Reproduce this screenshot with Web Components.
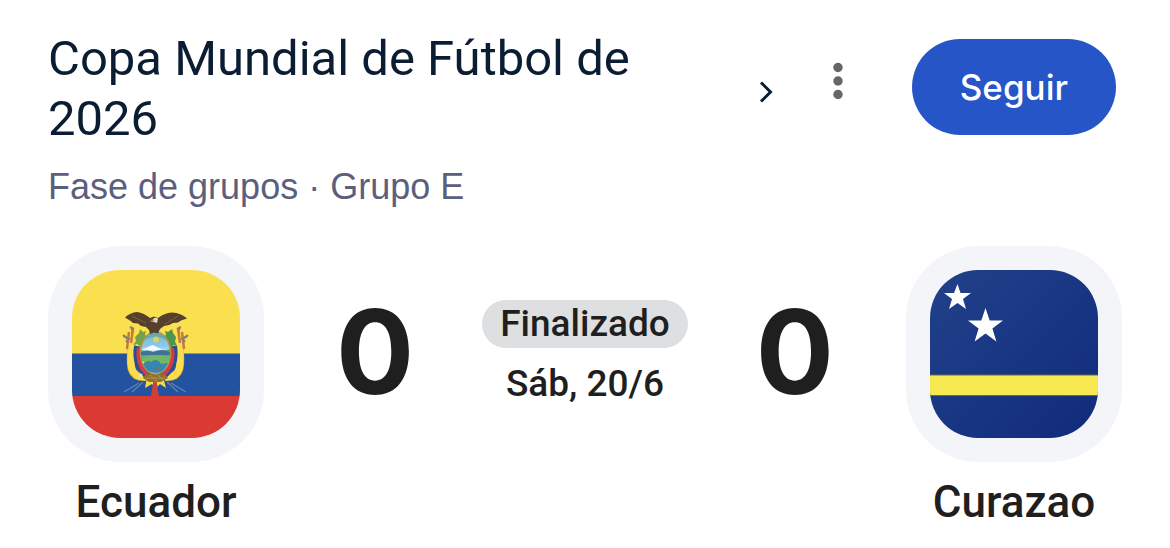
<!DOCTYPE html>
<html lang="es">
<head>
<meta charset="utf-8">
<meta name="viewport" content="width=device-width, initial-scale=1">
<title>Ecuador 0 - 0 Curazao</title>
<style>
  body { margin: 0; background: #fff; color: #1f1f1f; font-family: Roboto, "Liberation Sans", sans-serif; }
</style>
</head>
<body>
<match-card>
  <competition-header slot="header">
    <span slot="title">Copa Mundial de Fútbol de 2026</span>
    <span slot="stage">Fase de grupos · Grupo E</span>
  </competition-header>
  <team-badge slot="home"><flag-ecuador slot="flag"></flag-ecuador>Ecuador</team-badge>
  <team-score slot="home-score">0</team-score>
  <match-status slot="status">Finalizado<time slot="date" datetime="2026-06-20">Sáb, 20/6</time></match-status>
  <team-score slot="away-score">0</team-score>
  <team-badge slot="away"><flag-curacao slot="flag"></flag-curacao>Curazao</team-badge>
</match-card>

<script>
function define(name, html) {
  const template = document.createElement('template');
  template.innerHTML = html;
  customElements.define(name, class extends HTMLElement {
    constructor() {
      super();
      this.attachShadow({ mode: 'open' }).append(template.content.cloneNode(true));
    }
  });
}

define('match-card', `
  <style>
    :host { display: block; padding: 29px 48px 16px; }
    .match { display: grid; grid-template-columns: auto 1fr auto; margin-top: 35px; }
    .result { display: grid; grid-template-columns: 1fr auto 1fr; align-items: center;
      justify-items: center; height: 216px; padding: 0 4px; }
  </style>
  <slot name="header"></slot>
  <main class="match">
    <slot name="home"></slot>
    <div class="result">
      <slot name="home-score"></slot>
      <slot name="status"></slot>
      <slot name="away-score"></slot>
    </div>
    <slot name="away"></slot>
  </main>`);

define('competition-header', `
  <style>
    :host { display: block; }
    header { display: grid; grid-template-columns: 1fr auto auto; align-items: start; padding-right: 6px; }
    a { display: flex; align-items: center; justify-content: space-between; color: #0a1d33; text-decoration: none; }
    h1 { margin: 0; max-width: 640px; font-size: 49px; line-height: 60px; font-weight: 400; }
    p { grid-column: 1; margin: 14px 0 0; color: #5c5e7e; font: 36px/48px "Liberation Sans", Arial, sans-serif; }
    svg { display: block; }
    .chevron { flex: none; margin-top: 6px; }
    button { border: 0; padding: 0; background: none; cursor: pointer; }
    .more { width: 48px; height: 60px; margin: 22px 50px 0 36px; }
    .more svg { margin: auto; }
    .follow { height: 96px; margin-top: 10px; padding: 0 48px; border-radius: 48px; background: #2655c8;
      color: #fff; font: 500 35px/48px Inter, "Liberation Sans", sans-serif; }
  </style>
  <header>
    <a href="#competicion">
      <h1><slot name="title"></slot></h1>
      <svg class="chevron" width="24" height="24" viewBox="0 0 24 24" aria-hidden="true">
        <path d="M7 2.500 16.500 12 7 21.500" fill="none" stroke="#0a1d33" stroke-width="3"/>
      </svg>
    </a>
    <button class="more" type="button" aria-label="Más opciones">
      <svg width="12" height="40" viewBox="0 0 12 40" fill="#666" aria-hidden="true">
        <circle cx="6" cy="6.500" r="4.700"/><circle cx="6" cy="20" r="4.700"/><circle cx="6" cy="33.500" r="4.700"/>
      </svg>
    </button>
    <button class="follow" type="button">Seguir</button>
    <p><slot name="stage"></slot></p>
  </header>`);

define('team-badge', `
  <style>
    :host { display: block; text-align: center; }
    .tile { box-sizing: border-box; width: 216px; padding: 24px; border-radius: 72px; background: #f3f5f8; }
    .name { margin-top: 12px; font: 500 44px/56px Roboto, sans-serif; }
  </style>
  <div class="tile"><slot name="flag"></slot></div>
  <div class="name"><slot></slot></div>`);

define('team-score', `
  <style>
    :host { display: block; padding-bottom: 4px; font: 700 116px/120px Inter, sans-serif; }
  </style>
  <slot></slot>`);

define('match-status', `
  <style>
    :host { display: flex; flex-direction: column; align-items: center; gap: 12px;
      font-size: 37px; line-height: 48px; font-weight: 500; }
    .state { padding: 0 18px; border-radius: 24px; background: #dedfe1; }
  </style>
  <div class="state"><slot></slot></div>
  <slot name="date"></slot>`);

const flagStyle = `
  <style>
    :host { display: block; border-radius: 48px; overflow: hidden; }
    svg { display: block; width: 100%; }
  </style>`;

define('flag-ecuador', flagStyle + `
  <svg viewBox="0 0 168 168" role="img" aria-label="Bandera de Ecuador">
    <defs><linearGradient id="sky" x2="0" y2="1">
      <stop stop-color="#79b8c6"/><stop offset=".35" stop-color="#8dc9ec"/><stop offset=".5" stop-color="#e4f2fa"/>
    </linearGradient></defs>
    <path fill="#fae04f" d="M0 0h168v84H0z"/>
    <path fill="#2252a0" d="M0 83.500h168V126H0z"/>
    <path fill="#db3a34" d="M0 126h168v42H0z"/>
    <!-- lances and poles behind the banners -->
    <g fill="none" stroke="#a18b68" stroke-width="1.200">
      <path d="M59 57 63 82M108 57 104 82M51 66l8 6M116 66l-8 6"/>
      <path stroke="#6684ac" d="M67 113 52 122M99 113 114 122M71 112 60 122M95 112 106 122"/>
    </g>
    <!-- banners -->
    <g fill="none">
      <path stroke="#d5a534" stroke-width="8" d="M60 72C57 98 58 108 74 107M107 72C110 98 109 108 93 107"/>
      <path stroke="#f9df50" stroke-width="7" d="M60 66C57 98 58 108 74 107M107 66C110 98 109 108 93 107"/>
      <path stroke="#275093" stroke-width="6" d="M65 76Q62 95 74 105M102 76Q105 95 93 105"/>
      <path stroke="#d23c43" stroke-width="4" d="M67 78Q64 95 77 106M100 78Q103 95 90 106"/>
      <path stroke="#c57a3d" stroke-width="2.500" d="M57 62 55 79M110 62 112 79M61 59l-2 14M106 59l2 14"/>
      <path stroke="#88816b" stroke-width="2" d="M51 65l6 4-3 3M116 65l-6 4 3 3M58 57l4 2M109 57l-4 2"/>
    </g>
    <!-- laurel and palm -->
    <path fill="#73a344" d="m63 67 4-4 1-4 3 3 3-1-1 4 3 2-7 10-4-3-4 1 3-4z"/>
    <path fill="#4e944b" d="m104 67-3-4-1-4-4 3-3-1 1 4-3 2 7 11 4-3 3 1-2-4z"/>
    <path d="m75 107-2 11 7-4 3 3 1-9zM91 107l3 11-6-4-3 3-1-9z" fill="#f4dc46"/>
    <path d="m82 107-3 19h8l-3-19z" fill="#cc403e"/>
    <path d="M73 105q10-4 20 0l3 3-7 4H77l-6-4z" fill="#8c7132"/>
    <path d="M74 108h19M78 105l7 6M86 105l5 5" stroke="#b89338" fill="none"/>
    <!-- shield -->
    <ellipse cx="83.500" cy="83" rx="15" ry="21" fill="url(#sky)" stroke="#b59249" stroke-width="1.600"/>
    <path d="M71 71q12-18 25 0Q83 63 71 71" fill="#69a8b4"/>
    <circle cx="84" cy="69.500" r="3" fill="#d8d35b"/>
    <path d="m70 80 8-4 3-1 12 6z" fill="#f4fafc"/>
    <path d="M69 80q14 4 29-1v12H69z" fill="#62a47f"/>
    <path d="M69 82q6-3 12 0 8-4 17 0v3H69z" fill="#3e7397"/>
    <path d="M69 88q14-5 29-1l-2 7-7 2-16-2z" fill="#73b665"/>
    <path d="M71 94q5-5 8-2 6-5 10 2l7-1q-4 10-12 10-9 0-13-9" fill="#3786ae"/>
    <path d="M82 97h8l-2 2h-5z" fill="#7a7061"/>
    <circle cx="69" cy="105" r="1.500" fill="#d9e5ed"/>
    <!-- condor -->
    <path fill="#54402b" d="M53 47.500q5-5 12-5.500 7 1 13 6l4-1.500 4 1.500q6-5 14-5.500 9 .5 15 6l-6 2-3 2-5 .5-4 2-5 1-4 3-2 4.500-4-1-4 1.500-1-4-3-3-5-1-3-2.500-5-.5-3-2.500z"/>
    <path d="m60 46 14 7M106 46l-13 8" stroke="#76603d" fill="none"/>
    <path d="m79 52 3-4q3-1 4 1l-1 4-3-1z" fill="#e6d5c7"/>
    <path d="m78 51 3-2 1 2-2 1z" fill="#b66c60"/>
  </svg>`);

define('flag-curacao', flagStyle + `
  <svg viewBox="0 0 168 168" role="img" aria-label="Bandera de Curazao">
    <defs><linearGradient id="field" x2="1" y2="1">
      <stop stop-color="#22418a"/><stop offset="1" stop-color="#102b7b"/>
    </linearGradient></defs>
    <path fill="url(#field)" d="M0 0h168v168H0z"/>
    <path fill="#f7e952" stroke="#686c46" d="M-1 105h170v20.500H-1z"/>
    <path fill="#fff" d="m27.500 14 3 9H41l-8 6 3 10-8.500-6L19 39l3-10-8-6h10z"/>
    <path fill="#fff" d="m55.500 38 4.200 12.500H73l-10.600 8 4 13-10.900-8-10.900 8 4-13L38 50.500h13.300z"/>
  </svg>`);
</script>
</body>
</html>
